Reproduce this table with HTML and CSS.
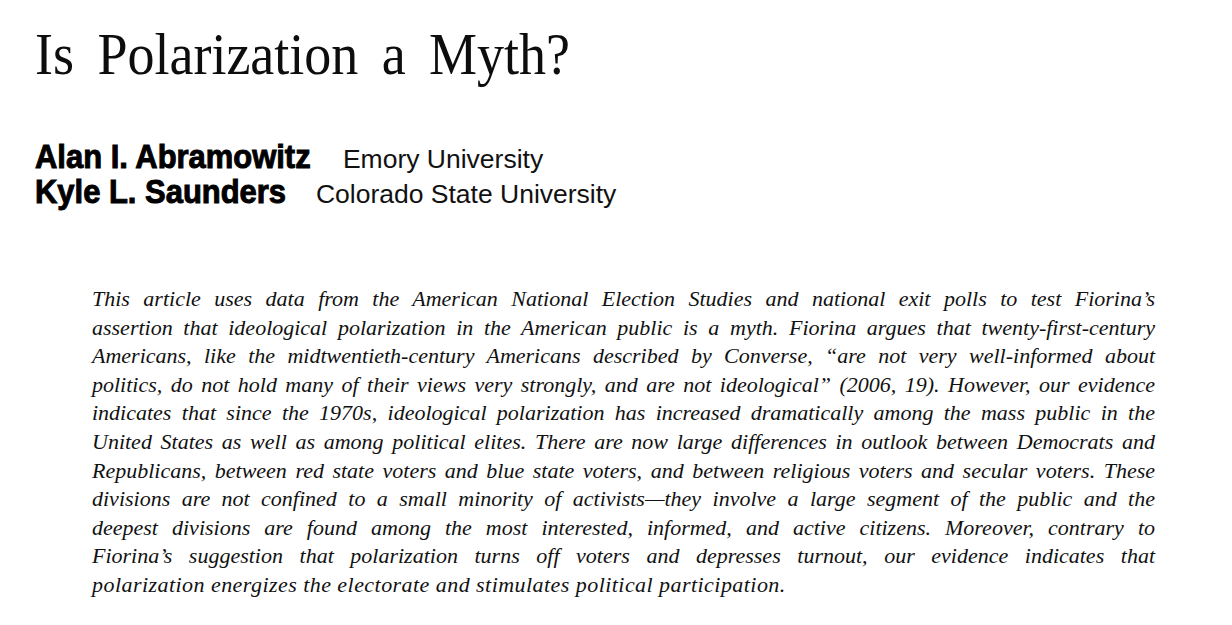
FILE: index.html
```html
<!DOCTYPE html>
<html lang="en">
<head>
<meta charset="utf-8">
<title>Is Polarization a Myth?</title>
<link rel="stylesheet" href="styles.css">
</head>
<body>
<main class="article">
  <h1 class="title">Is Polarization a Myth?</h1>
  <div class="authors">
    <div class="author"><span class="name">Alan I. Abramowitz</span><span class="affil">Emory University</span></div>
    <div class="author"><span class="name">Kyle L. Saunders</span><span class="affil">Colorado State University</span></div>
  </div>
  <p class="abstract">
    <span class="line">This article uses data from the American National Election Studies and national exit polls to test Fiorina’s</span>
    <span class="line">assertion that ideological polarization in the American public is a myth. Fiorina argues that twenty-first-century</span>
    <span class="line">Americans, like the midtwentieth-century Americans described by Converse, “are not very well-informed about</span>
    <span class="line">politics, do not hold many of their views very strongly, and are not ideological” (2006, 19). However, our evidence</span>
    <span class="line">indicates that since the 1970s, ideological polarization has increased dramatically among the mass public in the</span>
    <span class="line">United States as well as among political elites. There are now large differences in outlook between Democrats and</span>
    <span class="line">Republicans, between red state voters and blue state voters, and between religious voters and secular voters. These</span>
    <span class="line">divisions are not confined to a small minority of activists—they involve a large segment of the public and the</span>
    <span class="line">deepest divisions are found among the most interested, informed, and active citizens. Moreover, contrary to</span>
    <span class="line">Fiorina’s suggestion that polarization turns off voters and depresses turnout, our evidence indicates that</span>
    <span class="line last">polarization energizes the electorate and stimulates political participation.</span>
  </p>
</main>
</body>
</html>
```

FILE: styles.css
```css
html, body {
  margin: 0;
  padding: 0;
  background: #ffffff;
}

body {
  color: #111111;
  font-family: "Liberation Serif", "Times New Roman", serif;
}

.article {
  padding: 18px 0 0 35px;
}

.title {
  margin: 0;
  font-family: "Liberation Serif", "Times New Roman", serif;
  font-weight: normal;
  font-size: 60px;
  line-height: 72px;
  word-spacing: 11px;
  transform: scaleX(0.9);
  transform-origin: left center;
  color: #0d0d0d;
}

.authors {
  margin-top: 49px;
  display: flex;
  flex-direction: column;
}

.author {
  display: flex;
  align-items: baseline;
  gap: 32px;
  height: 35px;
}

.name {
  font-family: "Liberation Sans", Arial, sans-serif;
  font-weight: bold;
  font-size: 34px;
  line-height: 35px;
  -webkit-text-stroke: 1px #000;
  color: #000;
  display: inline-block;
  transform: scaleX(0.91);
  transform-origin: left center;
  margin-right: -27px;
}

.affil {
  font-family: "Liberation Sans", Arial, sans-serif;
  font-size: 26.5px;
  line-height: 35px;
  color: #111;
}

.abstract {
  margin: 76px 0 0 57px;
  width: 1063px;
  font-family: "Liberation Serif", "Times New Roman", serif;
  font-style: italic;
  font-size: 22px;
  line-height: 28.6px;
  color: #111;
}

.line {
  display: block;
  text-align: justify;
  text-align-last: justify;
}

.line.last {
  text-align-last: left;
  letter-spacing: 0.45px;
}
```
